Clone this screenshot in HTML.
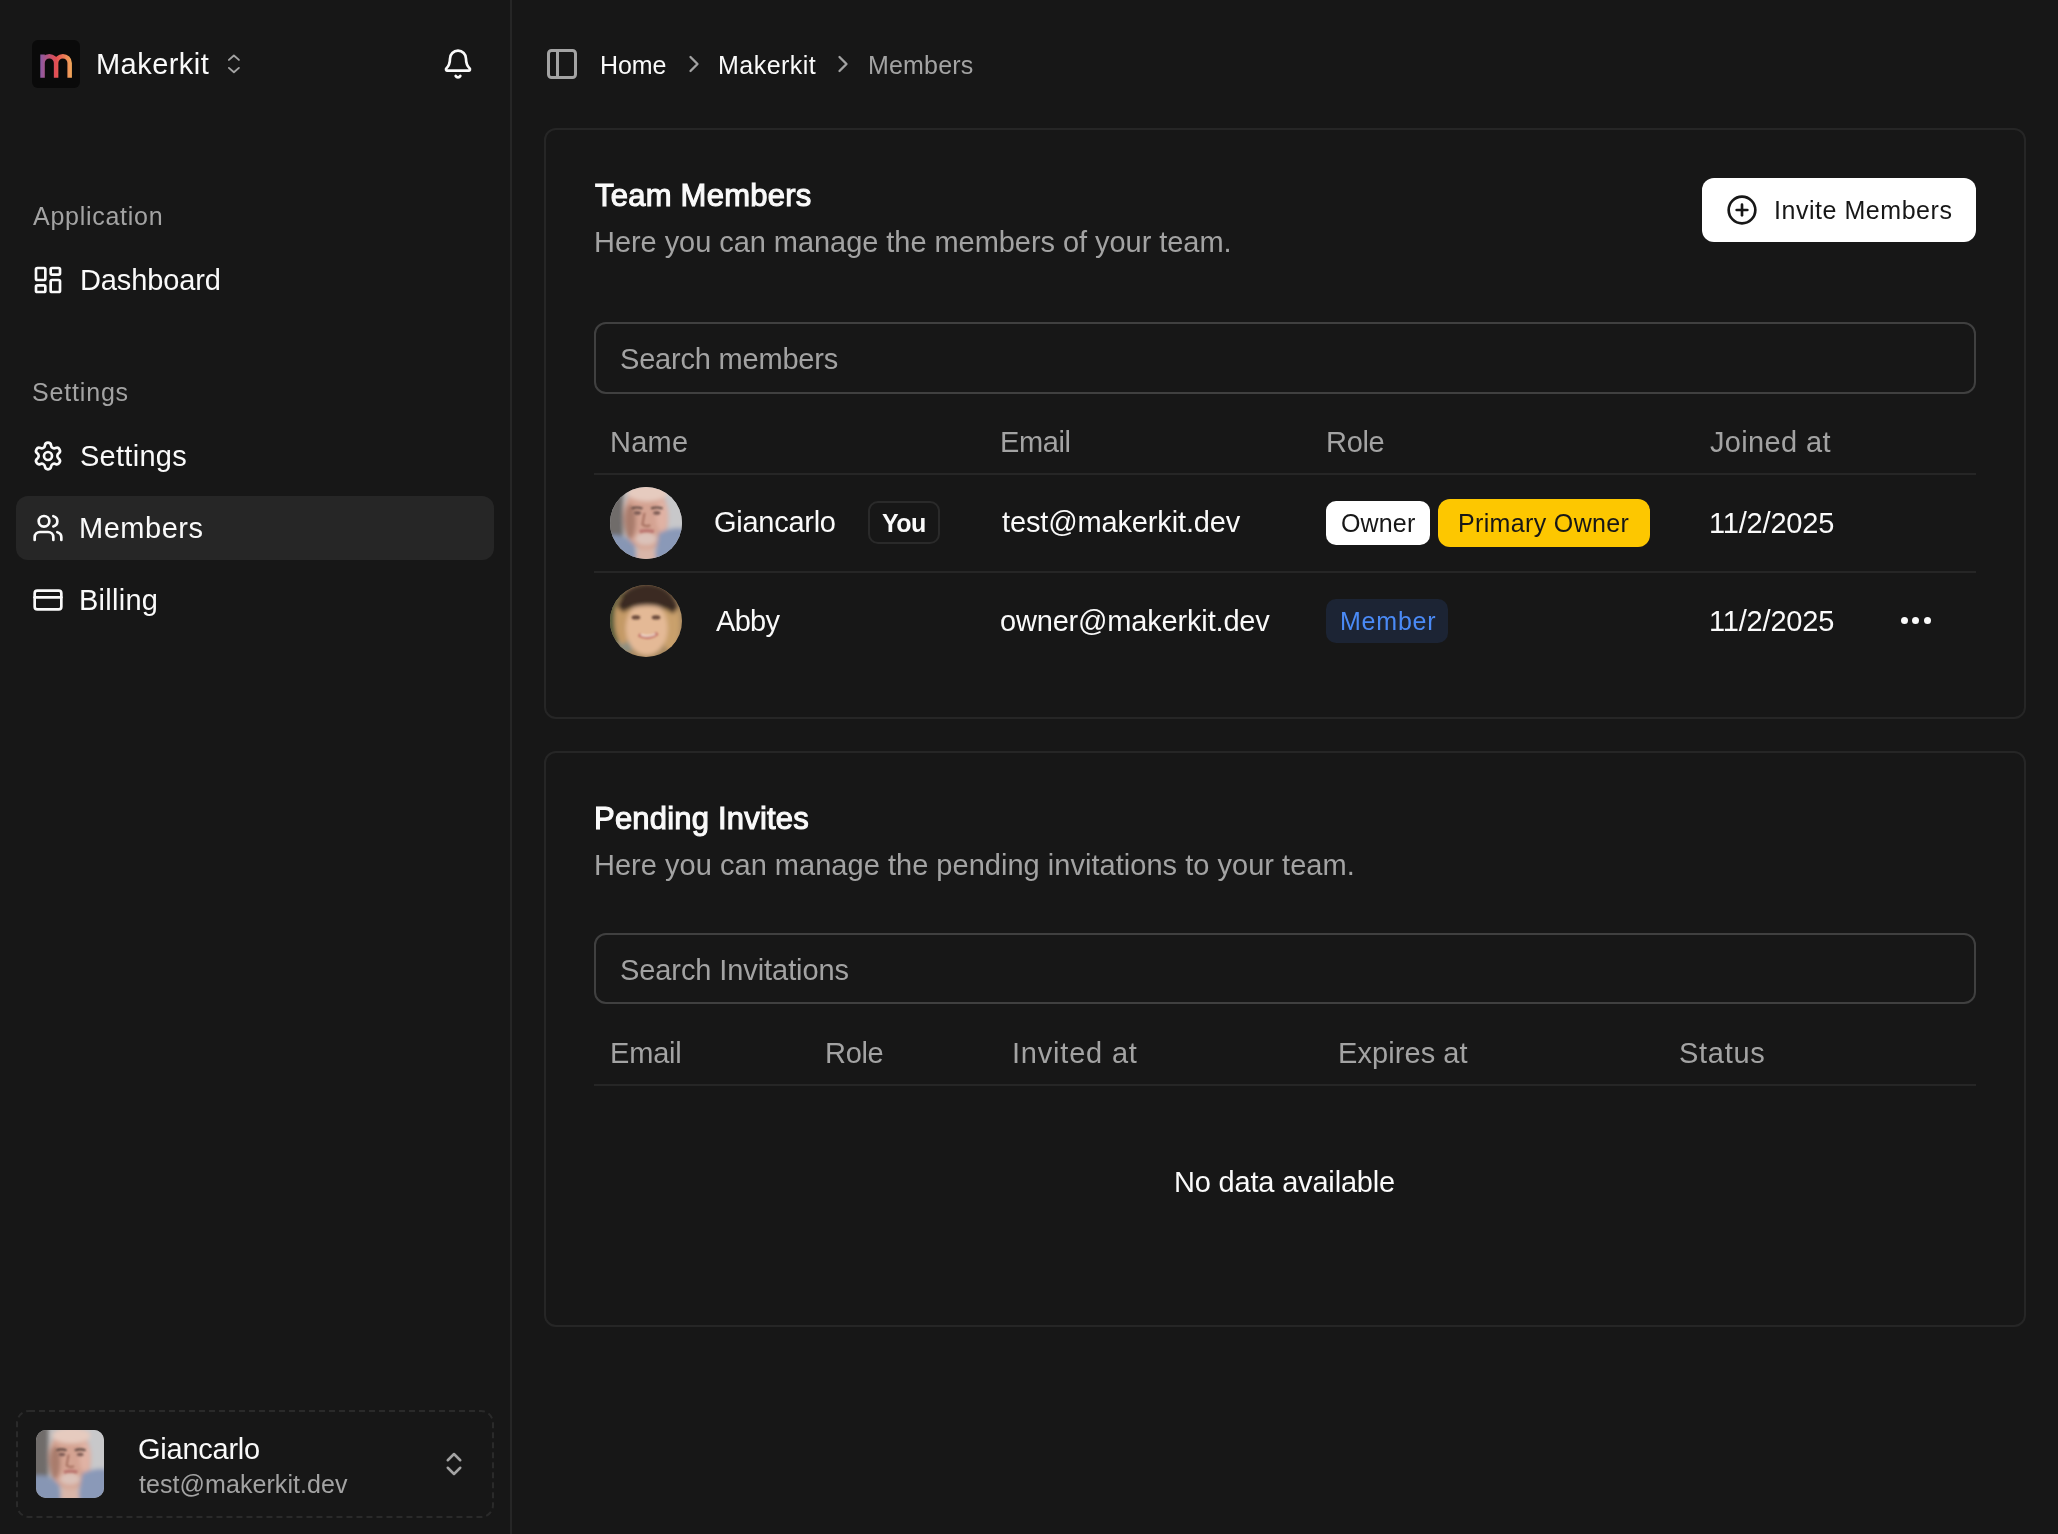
<!DOCTYPE html>
<html><head><meta charset="utf-8">
<style>
html,body{margin:0;padding:0;}
body{width:2058px;height:1534px;background:#171717;position:relative;overflow:hidden;font-family:"Liberation Sans",sans-serif;}
.t{position:absolute;white-space:nowrap;line-height:1;font-family:"Liberation Sans",sans-serif;will-change:transform;}
.abs{position:absolute;}
svg.i{position:absolute;fill:none;stroke:currentColor;stroke-linecap:round;stroke-linejoin:round;}
</style></head><body>
<!-- sidebar -->
<div class="abs" style="left:0;top:0;width:510px;height:1534px;background:#171717;border-right:2px solid #262626;"></div>
<!-- logo -->
<div class="abs" style="left:32px;top:40px;width:48px;height:48px;background:#0a0a0a;border-radius:6px;"></div>
<svg class="abs" style="left:32px;top:40px" width="48" height="48" viewBox="0 0 48 48">
 <defs><linearGradient id="lg" x1="8" y1="0" x2="40" y2="0" gradientUnits="userSpaceOnUse">
  <stop offset="0" stop-color="#8a5aa6"/><stop offset="0.5" stop-color="#e44d52"/><stop offset="1" stop-color="#f2a95a"/></linearGradient></defs>
 <path d="M10.55 37.7V14.6 M10.55 22.9A6.775 6.775 0 0 1 24.1 22.9V37.7 M24.1 22.9A6.775 6.775 0 0 1 37.65 22.9V37.7" stroke="url(#lg)" stroke-width="4.5" fill="none"/>
</svg>
<svg class="i" style="left:220px;top:45px;color:#a3a3a3" width="30" height="40" viewBox="220 45 30 40" stroke-width="1.9"><path d="M228.9 59.9 L233.9 55.5 L238.9 59.9"/><path d="M228.9 67.9 L233.9 72.3 L238.9 67.9"/></svg>
<!-- bell -->
<svg class="i" style="left:442px;top:47.5px;color:#fafafa" width="32" height="32" viewBox="0 0 24 24" stroke-width="2"><path d="M10.268 21a2 2 0 0 0 3.464 0"/><path d="M3.262 15.326A1 1 0 0 0 4 17h16a1 1 0 0 0 .74-1.673C19.41 13.956 18 12.499 18 8A6 6 0 0 0 6 8c0 4.499-1.411 5.956-2.738 7.326"/></svg>
<!-- nav icons -->
<svg class="i" style="left:32px;top:264px;color:#fafafa" width="32" height="32" viewBox="0 0 24 24" stroke-width="2"><rect width="7" height="9" x="3" y="3" rx="1"/><rect width="7" height="5" x="14" y="3" rx="1"/><rect width="7" height="9" x="14" y="12" rx="1"/><rect width="7" height="5" x="3" y="16" rx="1"/></svg>
<svg class="i" style="left:32px;top:440px;color:#fafafa" width="32" height="32" viewBox="0 0 24 24" stroke-width="2"><path d="M9.671 4.136a2.34 2.34 0 0 1 4.659 0 2.34 2.34 0 0 0 3.319 1.915 2.34 2.34 0 0 1 2.33 4.033 2.34 2.34 0 0 0 0 3.831 2.34 2.34 0 0 1-2.33 4.033 2.34 2.34 0 0 0-3.319 1.915 2.34 2.34 0 0 1-4.659 0 2.34 2.34 0 0 0-3.32-1.915 2.34 2.34 0 0 1-2.33-4.033 2.34 2.34 0 0 0 0-3.831A2.34 2.34 0 0 1 6.35 6.051a2.34 2.34 0 0 0 3.319-1.915"/><circle cx="12" cy="12" r="3"/></svg>
<div class="abs" style="left:16px;top:496px;width:478px;height:64px;background:#262626;border-radius:12px;"></div>
<svg class="i" style="left:32px;top:512px;color:#fafafa" width="32" height="32" viewBox="0 0 24 24" stroke-width="2"><path d="M16 21v-2a4 4 0 0 0-4-4H6a4 4 0 0 0-4 4v2"/><circle cx="9" cy="7" r="4"/><path d="M22 21v-2a4 4 0 0 0-3-3.87"/><path d="M16 3.13a4 4 0 0 1 0 7.75"/></svg>
<svg class="i" style="left:32px;top:584px;color:#fafafa" width="32" height="32" viewBox="0 0 24 24" stroke-width="2"><rect width="20" height="14" x="2" y="5" rx="2"/><line x1="2" x2="22" y1="10" y2="10"/></svg>
<!-- user card -->
<svg class="abs" style="left:16px;top:1410px" width="478" height="108" viewBox="0 0 478 108"><rect x="1" y="1" width="476" height="106" rx="12" fill="none" stroke="#2a2a2a" stroke-width="2" stroke-dasharray="6 4"/></svg>
<svg class="abs" style="left:36px;top:1430px" width="68" height="68" viewBox="0 0 100 100"><defs><filter id="FB" x="-20%" y="-20%" width="140%" height="140%"><feGaussianBlur stdDeviation="3"/></filter><filter id="FS" x="-20%" y="-20%" width="140%" height="140%"><feGaussianBlur stdDeviation="1.6"/></filter><clipPath id="ca"><rect width="100" height="100" rx="15"/></clipPath></defs><g clip-path="url(#ca)">
  <rect width="100" height="100" fill="#bdbcbd"/>
  <g filter="url(#FB)">
  <rect x="-10" y="-10" width="28" height="120" fill="#6f6c6b"/>
  <rect x="72" y="-10" width="40" height="120" fill="#c8c8ca"/>
  <ellipse cx="50" cy="42" rx="31" ry="46" fill="#d4a392"/>
  <ellipse cx="52" cy="8" rx="28" ry="12" fill="#e6cbbf"/>
  <ellipse cx="28" cy="48" rx="8" ry="24" fill="#a97b6c"/>
  <ellipse cx="72" cy="40" rx="8" ry="22" fill="#e0b2a4"/>
  <path d="M-5 68 Q18 62 34 80 L38 110 H-5Z" fill="#8796b4"/>
  <path d="M68 64 Q88 54 105 58 V110 H60Z" fill="#8a99b8"/>
  <ellipse cx="50" cy="72" rx="15" ry="9" fill="#dbc2b9"/>
  <path d="M38 86 L62 86 L64 105 H36Z" fill="#d9b6a9"/>
  </g>
  <g filter="url(#FS)">
  <path d="M30 30 Q37 27 45 30" stroke="#5b443e" stroke-width="3" fill="none"/>
  <path d="M57 30 Q65 27 73 30" stroke="#5b443e" stroke-width="3" fill="none"/>
  <ellipse cx="38" cy="36" rx="5" ry="2.5" fill="#7b5a52"/>
  <ellipse cx="65" cy="36" rx="5" ry="2.5" fill="#7b5a52"/>
  <path d="M48 36 L45 52 Q50 56 56 53" stroke="#a87262" stroke-width="3" fill="none"/>
  <path d="M41 62 Q51 59 61 62" stroke="#bb7670" stroke-width="4.5" fill="none"/>
  </g>
</g></svg>
<svg class="i" style="left:438.5px;top:1449px;color:#a3a3a3" width="30" height="30" viewBox="0 0 24 24" stroke-width="2"><path d="m7 15 5 5 5-5"/><path d="m7 9 5-5 5 5"/></svg>

<!-- main header -->
<svg class="i" style="left:544px;top:46px;color:#a3a3a3" width="36" height="36" viewBox="0 0 24 24" stroke-width="2"><rect width="18" height="18" x="3" y="3" rx="2"/><path d="M9 3v18"/></svg>
<svg class="i" style="left:680.4px;top:49.75px;color:#a3a3a3" width="28" height="28" viewBox="0 0 24 24" stroke-width="2"><path d="m9 18 6-6-6-6"/></svg>
<svg class="i" style="left:829.3px;top:49.75px;color:#a3a3a3" width="28" height="28" viewBox="0 0 24 24" stroke-width="2"><path d="m9 18 6-6-6-6"/></svg>

<!-- card 1 -->
<div class="abs" style="left:544px;top:128px;width:1478px;height:587px;border:2px solid #262626;border-radius:12px;"></div>
<div class="abs" style="left:1702px;top:178px;width:274px;height:64px;background:#ffffff;border-radius:12px;"></div>
<svg class="i" style="left:1726px;top:194px;color:#171717" width="32" height="32" viewBox="0 0 24 24" stroke-width="2"><circle cx="12" cy="12" r="10"/><path d="M8 12h8"/><path d="M12 8v8"/></svg>
<div class="abs" style="left:594px;top:322px;width:1378px;height:68px;border:2px solid #404040;border-radius:12px;"></div>
<div class="abs" style="left:594px;top:473px;width:1382px;height:2px;background:#262626;"></div>
<div class="abs" style="left:594px;top:571px;width:1382px;height:2px;background:#262626;"></div>
<!-- avatar 1 -->
<svg class="abs" style="left:610px;top:487px" width="72" height="72" viewBox="0 0 100 100"><defs><clipPath id="c1"><circle cx="50" cy="50" r="50"/></clipPath></defs><g clip-path="url(#c1)">
  <rect width="100" height="100" fill="#bdbcbd"/>
  <g filter="url(#FB)">
  <rect x="-10" y="-10" width="28" height="120" fill="#6f6c6b"/>
  <rect x="72" y="-10" width="40" height="120" fill="#c8c8ca"/>
  <ellipse cx="50" cy="42" rx="31" ry="46" fill="#d4a392"/>
  <ellipse cx="52" cy="8" rx="28" ry="12" fill="#e6cbbf"/>
  <ellipse cx="28" cy="48" rx="8" ry="24" fill="#a97b6c"/>
  <ellipse cx="72" cy="40" rx="8" ry="22" fill="#e0b2a4"/>
  <path d="M-5 68 Q18 62 34 80 L38 110 H-5Z" fill="#8796b4"/>
  <path d="M68 64 Q88 54 105 58 V110 H60Z" fill="#8a99b8"/>
  <ellipse cx="50" cy="72" rx="15" ry="9" fill="#dbc2b9"/>
  <path d="M38 86 L62 86 L64 105 H36Z" fill="#d9b6a9"/>
  </g>
  <g filter="url(#FS)">
  <path d="M30 30 Q37 27 45 30" stroke="#5b443e" stroke-width="3" fill="none"/>
  <path d="M57 30 Q65 27 73 30" stroke="#5b443e" stroke-width="3" fill="none"/>
  <ellipse cx="38" cy="36" rx="5" ry="2.5" fill="#7b5a52"/>
  <ellipse cx="65" cy="36" rx="5" ry="2.5" fill="#7b5a52"/>
  <path d="M48 36 L45 52 Q50 56 56 53" stroke="#a87262" stroke-width="3" fill="none"/>
  <path d="M41 62 Q51 59 61 62" stroke="#bb7670" stroke-width="4.5" fill="none"/>
  </g>
</g></svg>
<div class="abs" style="left:868px;top:501px;width:68px;height:39px;border:2px solid #2a2a2a;border-radius:10px;"></div>
<div class="abs" style="left:1326px;top:501px;width:104px;height:44px;background:#ffffff;border-radius:10px;"></div>
<div class="abs" style="left:1438px;top:499px;width:212px;height:48px;background:#fdc700;border-radius:12px;"></div>
<!-- avatar 2 -->
<svg class="abs" style="left:610px;top:585px" width="72" height="72" viewBox="0 0 100 100"><defs><clipPath id="c2"><circle cx="50" cy="50" r="50"/></clipPath></defs><g clip-path="url(#c2)">
  <rect width="100" height="100" fill="#a98a62"/>
  <g filter="url(#FB)">
  <rect x="-10" y="10" width="28" height="100" fill="#4f5a3a"/>
  <ellipse cx="22" cy="82" rx="12" ry="12" fill="#8e8f80"/>
  <ellipse cx="18" cy="48" rx="12" ry="34" fill="#c49a66"/>
  <ellipse cx="84" cy="55" rx="13" ry="36" fill="#c9a06c"/>
  <ellipse cx="51" cy="60" rx="29" ry="38" fill="#e4b996"/>
  <path d="M10 30 Q18 0 52 -2 Q86 0 94 32 L88 40 Q72 28 52 28 Q32 28 18 38Z" fill="#3b2b24"/>
  </g>
  <g filter="url(#FS)">
  <ellipse cx="36" cy="45" rx="6" ry="3" fill="#6a4a3a"/>
  <ellipse cx="64" cy="45" rx="6" ry="3" fill="#6a4a3a"/>
  <path d="M40 69 Q52 77 66 67" stroke="#c47468" stroke-width="5" fill="none"/>
  <path d="M43 69 Q52 73 63 68" stroke="#f2e0d6" stroke-width="2.5" fill="none"/>
  </g>
</g></svg>
<div class="abs" style="left:1326px;top:599px;width:122px;height:44px;background:#1c2434;border-radius:10px;"></div>
<div class="abs" style="left:1900.9px;top:617.3px;width:7px;height:7px;border-radius:50%;background:#fafafa;"></div>
<div class="abs" style="left:1912.3px;top:617.3px;width:7px;height:7px;border-radius:50%;background:#fafafa;"></div>
<div class="abs" style="left:1924.1px;top:617.3px;width:7px;height:7px;border-radius:50%;background:#fafafa;"></div>

<!-- card 2 -->
<div class="abs" style="left:544px;top:751px;width:1478px;height:572px;border:2px solid #262626;border-radius:12px;"></div>
<div class="abs" style="left:594px;top:933px;width:1378px;height:67px;border:2px solid #404040;border-radius:12px;"></div>
<div class="abs" style="left:594px;top:1084px;width:1382px;height:2px;background:#262626;"></div>

<div class="t" style="left:95.90px;top:49.90px;font-size:29px;font-weight:400;color:#fafafa;letter-spacing:0.460px">Makerkit</div>
<div class="t" style="left:33.10px;top:204.45px;font-size:25px;font-weight:400;color:#a3a3a3;letter-spacing:0.730px">Application</div>
<div class="t" style="left:79.50px;top:265.90px;font-size:29px;font-weight:400;color:#fafafa;letter-spacing:-0.125px">Dashboard</div>
<div class="t" style="left:32.10px;top:380.30px;font-size:25px;font-weight:400;color:#a3a3a3;letter-spacing:0.826px">Settings</div>
<div class="t" style="left:80.10px;top:441.55px;font-size:29px;font-weight:400;color:#fafafa;letter-spacing:0.274px">Settings</div>
<div class="t" style="left:79.10px;top:514.30px;font-size:29px;font-weight:400;color:#fafafa;letter-spacing:0.531px">Members</div>
<div class="t" style="left:79.10px;top:585.75px;font-size:29px;font-weight:400;color:#fafafa;letter-spacing:0.264px">Billing</div>
<div class="t" style="left:138.10px;top:1434.50px;font-size:29px;font-weight:400;color:#fafafa;letter-spacing:-0.243px">Giancarlo</div>
<div class="t" style="left:139.10px;top:1471.90px;font-size:25px;font-weight:400;color:#a3a3a3;letter-spacing:0.072px">test@makerkit.dev</div>
<div class="t" style="left:599.50px;top:52.50px;font-size:25px;font-weight:400;color:#fafafa;letter-spacing:-0.101px">Home</div>
<div class="t" style="left:717.50px;top:52.50px;font-size:25px;font-weight:400;color:#fafafa;letter-spacing:0.472px">Makerkit</div>
<div class="t" style="left:868.30px;top:52.50px;font-size:25px;font-weight:400;color:#a3a3a3;letter-spacing:0.167px">Members</div>
<div class="t" style="left:595.10px;top:179.80px;font-size:31px;font-weight:400;color:#fafafa;letter-spacing:0.236px;-webkit-text-stroke:1.1px currentColor">Team Members</div>
<div class="t" style="left:593.50px;top:228.00px;font-size:29px;font-weight:400;color:#a3a3a3;letter-spacing:-0.053px">Here you can manage the members of your team.</div>
<div class="t" style="left:1773.50px;top:198.10px;font-size:25px;font-weight:400;color:#171717;letter-spacing:0.538px">Invite Members</div>
<div class="t" style="left:619.50px;top:345.20px;font-size:29px;font-weight:400;color:#a3a3a3;letter-spacing:-0.198px">Search members</div>
<div class="t" style="left:609.90px;top:427.85px;font-size:29px;font-weight:400;color:#a3a3a3;letter-spacing:0.232px">Name</div>
<div class="t" style="left:1000.30px;top:427.85px;font-size:29px;font-weight:400;color:#a3a3a3;letter-spacing:-0.400px">Email</div>
<div class="t" style="left:1325.90px;top:427.85px;font-size:29px;font-weight:400;color:#a3a3a3;letter-spacing:-0.302px">Role</div>
<div class="t" style="left:1709.90px;top:427.85px;font-size:29px;font-weight:400;color:#a3a3a3;letter-spacing:0.350px">Joined at</div>
<div class="t" style="left:714.30px;top:508.20px;font-size:29px;font-weight:400;color:#fafafa;letter-spacing:-0.268px">Giancarlo</div>
<div class="t" style="left:881.50px;top:510.90px;font-size:25px;font-weight:700;color:#fafafa;letter-spacing:-0.500px">You</div>
<div class="t" style="left:1001.50px;top:508.30px;font-size:29px;font-weight:400;color:#fafafa;letter-spacing:-0.141px">test@makerkit.dev</div>
<div class="t" style="left:1341.30px;top:511.15px;font-size:25px;font-weight:400;color:#171717;letter-spacing:0.150px">Owner</div>
<div class="t" style="left:1457.70px;top:511.15px;font-size:25px;font-weight:400;color:#171717;letter-spacing:0.351px">Primary Owner</div>
<div class="t" style="left:1709.30px;top:508.70px;font-size:29px;font-weight:400;color:#fafafa;letter-spacing:-0.188px">11/2/2025</div>
<div class="t" style="left:716.10px;top:606.90px;font-size:29px;font-weight:400;color:#fafafa;letter-spacing:-0.697px">Abby</div>
<div class="t" style="left:999.50px;top:606.90px;font-size:29px;font-weight:400;color:#fafafa;letter-spacing:-0.177px">owner@makerkit.dev</div>
<div class="t" style="left:1339.70px;top:609.05px;font-size:25px;font-weight:400;color:#4a8af6;letter-spacing:0.780px">Member</div>
<div class="t" style="left:1709.30px;top:606.90px;font-size:29px;font-weight:400;color:#fafafa;letter-spacing:-0.188px">11/2/2025</div>
<div class="t" style="left:593.50px;top:802.80px;font-size:31px;font-weight:400;color:#fafafa;letter-spacing:0.200px;-webkit-text-stroke:1.1px currentColor">Pending Invites</div>
<div class="t" style="left:593.50px;top:850.85px;font-size:29px;font-weight:400;color:#a3a3a3;letter-spacing:0.025px">Here you can manage the pending invitations to your team.</div>
<div class="t" style="left:619.90px;top:955.80px;font-size:29px;font-weight:400;color:#a3a3a3;letter-spacing:-0.087px">Search Invitations</div>
<div class="t" style="left:609.50px;top:1038.75px;font-size:29px;font-weight:400;color:#a3a3a3;letter-spacing:-0.175px">Email</div>
<div class="t" style="left:825.10px;top:1038.75px;font-size:29px;font-weight:400;color:#a3a3a3;letter-spacing:-0.302px">Role</div>
<div class="t" style="left:1012.10px;top:1038.75px;font-size:29px;font-weight:400;color:#a3a3a3;letter-spacing:0.798px">Invited at</div>
<div class="t" style="left:1337.50px;top:1038.75px;font-size:29px;font-weight:400;color:#a3a3a3;letter-spacing:0.071px">Expires at</div>
<div class="t" style="left:1678.50px;top:1038.75px;font-size:29px;font-weight:400;color:#a3a3a3;letter-spacing:0.700px">Status</div>
<div class="t" style="left:1174.30px;top:1168.35px;font-size:29px;font-weight:400;color:#fafafa;letter-spacing:-0.183px">No data available</div>
</body></html>
